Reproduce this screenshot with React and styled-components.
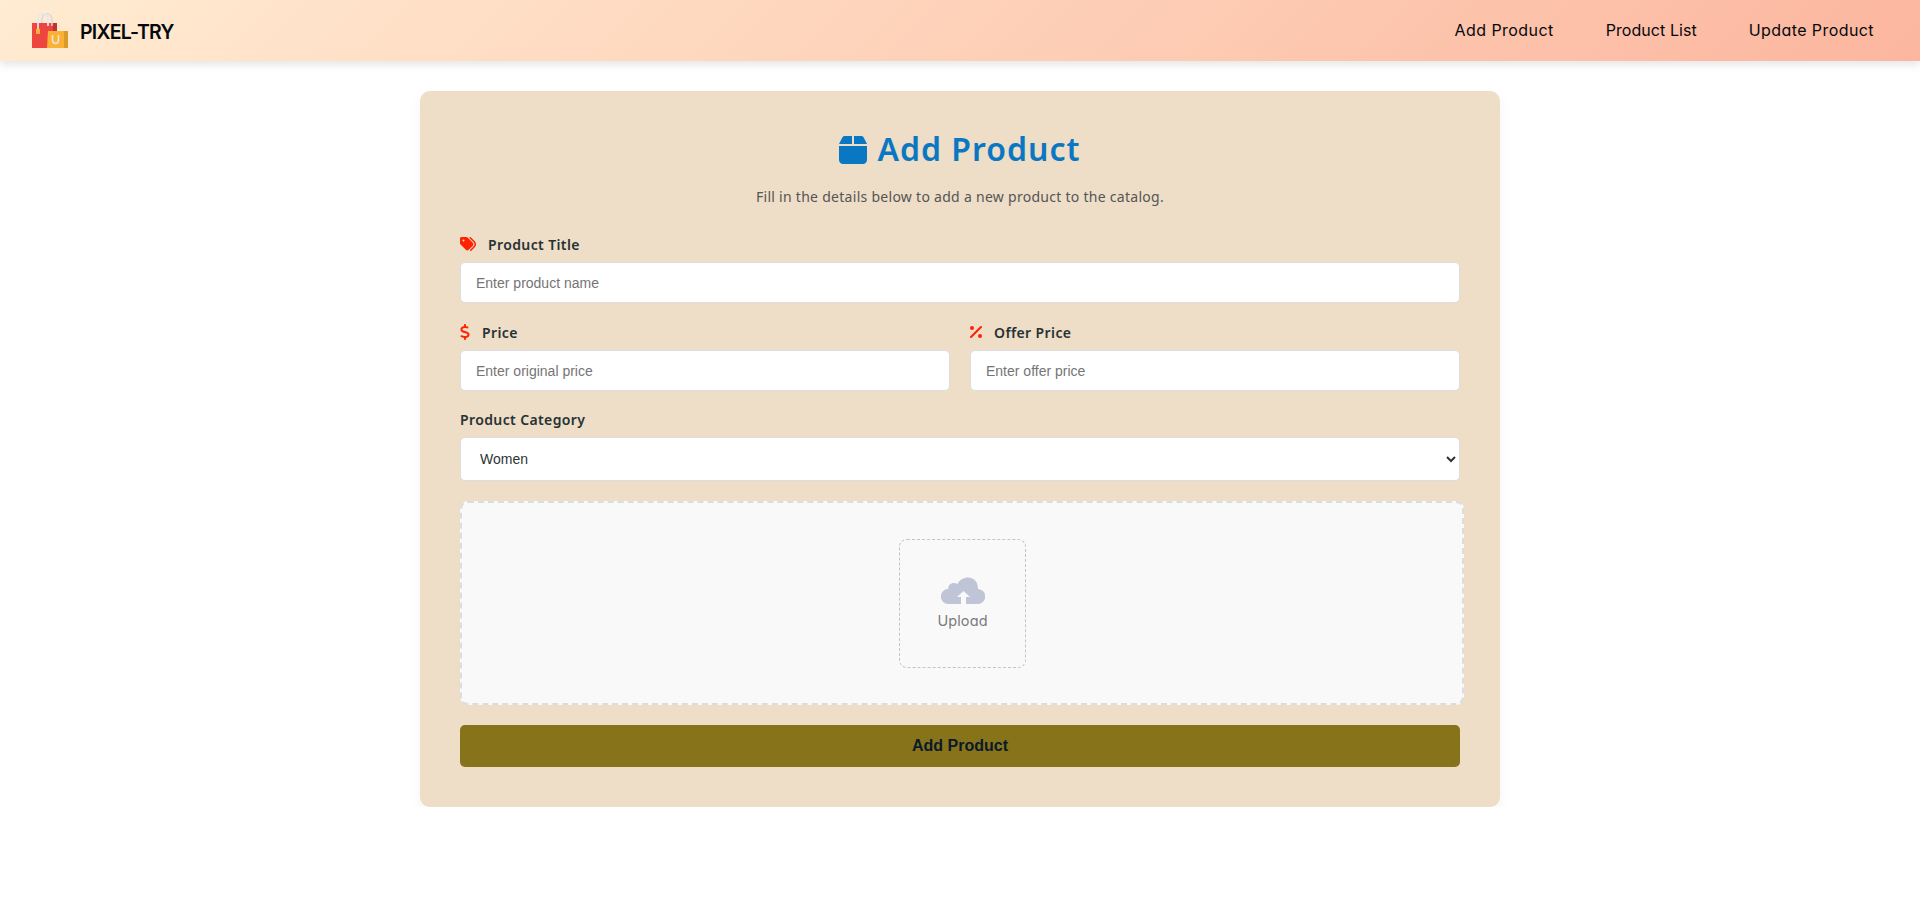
import React from "react";
import styled, { createGlobalStyle } from "styled-components";
import { FaBox, FaTags, FaDollarSign, FaPercent } from "react-icons/fa6";

const GlobalStyle = createGlobalStyle`
  * { box-sizing: border-box; }
  body { margin: 0; background: #fff; font-family: "Noto Sans", "Open Sans", sans-serif; }
`;

const Header = styled.header`
  height: 61px;
  padding: 0 46px 0 32px;
  display: flex;
  align-items: center;
  justify-content: space-between;
  background: linear-gradient(135deg, #ffecd2 0%, #fcb69f 100%);
  box-shadow: 0 4px 8px rgba(0, 0, 0, 0.1);
  font-family: "Inter", sans-serif;
  font-feature-settings: "cv11";
  color: #05090d;
`;

const Brand = styled.div`
  display: flex;
  align-items: center;
  gap: 11px;
  font-size: 19.5px;
  font-weight: 600;
  letter-spacing: -0.75px;
  span { padding-top: 2px; }
`;

const Nav = styled.nav`
  display: flex;
  gap: 52px;
  padding-bottom: 1px;
`;

const NavLink = styled.a`
  font-size: 16px;
  line-height: 24px;
  letter-spacing: ${(p) => p.$track}px;
  white-space: nowrap;
`;

const Card = styled.main`
  width: 1080px;
  height: 716px;
  margin: 30px auto 0;
  padding: 39px 40px 40px;
  border-radius: 10px;
  background: #eeddc7;
  box-shadow: 0 4px 12px rgba(0, 0, 0, 0.05);
`;

const Title = styled.h1`
  margin: 0;
  height: 38px;
  display: flex;
  align-items: center;
  justify-content: center;
  gap: 10px;
  color: #0a77c2;
  font-size: 32px;
  font-weight: 600;
  letter-spacing: 1px;
  line-height: 38px;
  svg { width: 28px; height: 32px; margin-top: 2px; }
`;

const Subtitle = styled.p`
  margin: 17px 0 0;
  height: 24px;
  line-height: 24px;
  text-align: center;
  font-size: 14px;
  letter-spacing: 0.28px;
  color: #555;
`;

const Form = styled.form`
  margin-top: 26px;
  display: flex;
  flex-direction: column;
`;

const Row = styled.div`
  display: grid;
  grid-template-columns: repeat(${(p) => p.$cols || 1}, 1fr);
  gap: 20px;
  margin-bottom: 20px;
`;

const Field = styled.div`
  display: flex;
  flex-direction: column;
`;

const Label = styled.label`
  height: ${(p) => p.$height || 27}px;
  display: flex;
  align-items: flex-start;
  gap: 12px;
  color: #263234;
  font-size: 14px;
  line-height: ${(p) => (p.$height ? 17 : 19)}px;
  font-weight: 600;
  letter-spacing: 0.38px;
  svg { width: ${(p) => p.$icon || 16}px; height: 16px; color: #ff2200; margin-top: 1px; }
`;

const Input = styled.input`
  width: 100%;
  height: 41px;
  padding: 0 15px;
  border: 1px solid #dcdde1;
  border-radius: 5px;
  background: #fff;
  font: 14px "Liberation Sans", Arial, sans-serif;
  &::placeholder { color: #757575; }
`;

const Select = styled.select`
  width: 100%;
  height: 44px;
  padding: 0 15px;
  border: 1px solid #dcdde1;
  border-radius: 5px;
  background: #fff;
  color: #2d3436;
  font: 14px "Liberation Sans", Arial, sans-serif;
`;

const DropZone = styled.div`
  width: 1004px;
  height: 204px;
  display: flex;
  align-items: center;
  justify-content: center;
  border: 2px dashed #dcdde1;
  border-radius: 8px;
  background: #f9f9f9;
`;

const UploadBox = styled.div`
  width: 127px;
  height: 129px;
  padding: 37px 0 0 1px;
  display: flex;
  flex-direction: column;
  align-items: center;
  border: 1px dashed #c4c4c4;
  border-radius: 8px;
  color: #7b7b7b;
  font: 14.5px/20px "Inter", sans-serif;
  font-feature-settings: "cv11";
  letter-spacing: 0.1px;
  span { margin-top: 7px; }
`;

const Submit = styled.button`
  margin-top: 20px;
  height: 42px;
  border: 0;
  border-radius: 5px;
  background: #87731a;
  color: #0a1a2a;
  font: bold 16px "Liberation Sans", Arial, sans-serif;
`;

const Logo = () => (
  <svg width="37" height="36" viewBox="0 0 37 36">
    <path d="M0 10h21v25H0z" fill="#ee4540" />
    <path d="M20 10h5v9h-4z" fill="#c13230" />
    <path d="M10 10V6.500c0-7.500 10-7.500 10 0V13" fill="none" stroke="#d8d9dc" strokeWidth="1.5" />
    <path d="M6 17V6.500c0-7.500 10-7.500 10 0V13" fill="none" stroke="#e6e6e8" strokeWidth="1.8" />
    <path d="M16 18h16v17H15z" fill="#f9b233" />
    <path d="M32 18h4v17h-4z" fill="#dc9a2a" />
    <path d="M4 16h4v5H4z" fill="#f9b233" />
    <path d="M20.500 22v5c0 4.500 6 4.500 6 0v-5" fill="none" stroke="#eee3ce" strokeWidth="1.6" />
  </svg>
);

const Cloud = () => (
  <svg width="44" height="27" viewBox="0 0 44 27">
    <path d="M7.500 27a7.500 7.500 0 0 1-.3-15C7 6.500 12.500 4.500 16.500 7 21-2.300 37-2.300 37 12a7.500 7.500 0 0 1-.5 15H25v-7h4l-6.500-6-6.500 6h4v7Z" fill="#bfc4d6" />
  </svg>
);

export default function App() {
  return (
    <>
      <GlobalStyle />
      <Header>
        <Brand><Logo /><span>PIXEL-TRY</span></Brand>
        <Nav>
          <NavLink $track={0.45}>Add Product</NavLink>
          <NavLink $track={0.05}>Product List</NavLink>
          <NavLink $track={0.42}>Update Product</NavLink>
        </Nav>
      </Header>
      <Card>
        <Title><FaBox />Add Product</Title>
        <Subtitle>Fill in the details below to add a new product to the catalog.</Subtitle>
        <Form>
          <Row>
            <Field>
              <Label><FaTags />Product Title</Label>
              <Input placeholder="Enter product name" />
            </Field>
          </Row>
          <Row $cols={2}>
            <Field>
              <Label $icon={10}><FaDollarSign />Price</Label>
              <Input placeholder="Enter original price" />
            </Field>
            <Field>
              <Label $icon={12}><FaPercent />Offer Price</Label>
              <Input placeholder="Enter offer price" />
            </Field>
          </Row>
          <Row>
            <Field>
              <Label $height={26}>Product Category</Label>
              <Select defaultValue="women"><option value="women">Women</option></Select>
            </Field>
          </Row>
          <DropZone>
            <UploadBox><Cloud /><span>Upload</span></UploadBox>
          </DropZone>
          <Submit type="button">Add Product</Submit>
        </Form>
      </Card>
    </>
  );
}
